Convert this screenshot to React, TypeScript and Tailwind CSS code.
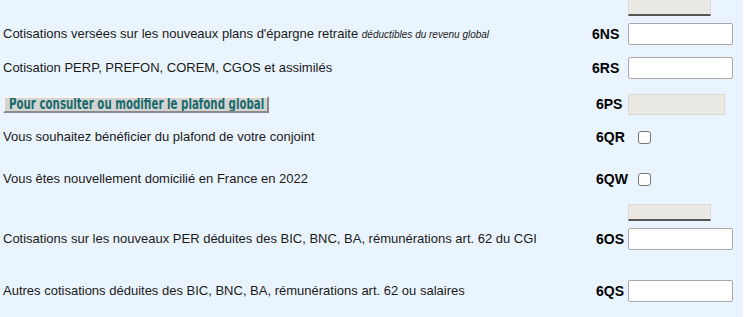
import React from "react";

const font = { fontFamily: '"Liberation Sans", Arial, sans-serif' };

function Input({ disabled = false, w = "w-[105px]" }: { disabled?: boolean; w?: string }) {
  return disabled ? (
    <div className={`${w} h-[21px] bg-[#ebe9e4] border border-[#d9d8d2]`} />
  ) : (
    <div className={`${w} h-[22px] bg-white border border-[#a9a9a9] rounded-[2px]`} />
  );
}

function Check() {
  return <div className="ml-[10px] w-[13px] h-[13px] bg-white border border-[#767676] rounded-[3px]" />;
}

function Row({
  mt,
  label,
  labelPl = "pl-[4px]",
  children,
  right,
}: {
  mt: string;
  label: string;
  labelPl?: string;
  children?: React.ReactNode;
  right: React.ReactNode;
}) {
  return (
    <div className={`flex items-center h-[22px] ${mt}`}>
      <div className="w-[592px] pl-[3px] text-[13px] text-[#1b1b1b] whitespace-nowrap">{children}</div>
      <div className={`w-[36px] ${labelPl} text-[14px] font-bold text-black`}>{label}</div>
      {right}
    </div>
  );
}

function GreyBox({ mt }: { mt: string }) {
  return (
    <div className={`flex ${mt}`}>
      <div className="ml-[628px] w-[83px] h-[17px] bg-[#ebe9e3] border border-[#dcdad4] border-b-2 border-b-[#555]" />
    </div>
  );
}

export default function App() {
  return (
    <div className="w-[750px] h-[317px] bg-white overflow-hidden" style={font}>
      <div className="w-[743px] h-[317px] bg-[#eaf4fe] flex flex-col">
        <div className="flex">
          <div className="ml-[628px] w-[83px] h-[16px] bg-[#ebe9e3] border-x border-[#dcdad4] border-b-2 border-b-[#555]" />
        </div>
        <Row mt="mt-[7px]" label="6NS" labelPl="pl-0" right={<Input />}>
          Cotisations versées sur les nouveaux plans d'épargne retraite{" "}
          <i className="text-[10px]">déductibles du revenu global</i>
        </Row>
        <Row mt="mt-[12px]" label="6RS" labelPl="pl-0" right={<Input />}>
          Cotisation PERP, PREFON, COREM, CGOS et assimilés
        </Row>
        <Row mt="mt-[14px]" label="6PS" right={<Input disabled w="w-[97px]" />}>
          <button className="flex items-center h-[17px] w-[266px] overflow-hidden bg-[#d4d4d4] border-2 border-t-[#f4f4f4] border-l-[#f4f4f4] border-b-[#8a8a8a] border-r-[#8a8a8a] pl-[4px]">
            <span
              className="block origin-left scale-x-[0.76] text-[#1a6b6b] font-bold text-[15px] leading-[13px] whitespace-nowrap"
              style={{ fontFamily: '"DejaVu Sans Condensed", sans-serif' }}
            >
              Pour consulter ou modifier le plafond global
            </span>
          </button>
        </Row>
        <Row mt="mt-[11px]" label="6QR" right={<Check />}>
          Vous souhaitez bénéficier du plafond de votre conjoint
        </Row>
        <Row mt="mt-[20px]" label="6QW" right={<Check />}>
          Vous êtes nouvellement domicilié en France en 2022
        </Row>
        <GreyBox mt="mt-[14px]" />
        <Row mt="mt-[7px]" label="6OS" right={<Input />}>
          Cotisations sur les nouveaux PER déduites des BIC, BNC, BA, rémunérations art. 62 du CGI
        </Row>
        <Row mt="mt-[30px]" label="6QS" right={<Input />}>
          Autres cotisations déduites des BIC, BNC, BA, rémunérations art. 62 ou salaires
        </Row>
      </div>
    </div>
  );
}
